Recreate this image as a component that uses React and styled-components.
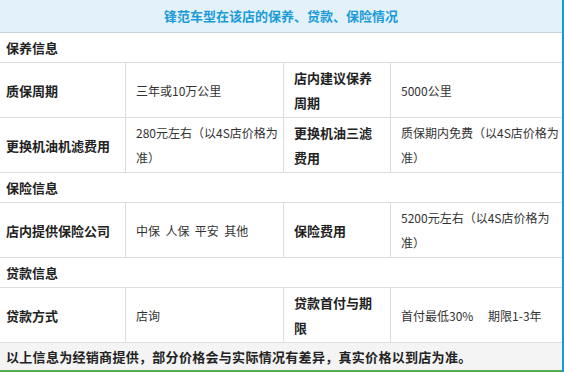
import React from "react";
import styled, { createGlobalStyle } from "styled-components";

const GlobalStyle = createGlobalStyle`
  html, body {
    margin: 0;
    padding: 0;
    background: #ffffff;
  }
  body {
    font-family: "Noto Sans CJK SC", "Liberation Sans", sans-serif;
    font-size: 12px;
    color: #333333;
  }
`;

const Wrap = styled.div`
  width: 562px;
  height: 372px;
  border-right: 2px solid #1a97d5;
  overflow: hidden;
`;

const Grid = styled.div`
  display: grid;
  grid-template-columns: 125px 158px 107px 172px;
`;

const Title = styled.div`
  grid-column: 1 / -1;
  height: 32px;
  line-height: 31px;
  text-align: center;
  background: #e3f2fa;
  border-bottom: 1px solid #c3d5de;
  color: #1b9bd7;
  font-size: 13px;
  font-weight: 700;
`;

const Section = styled.div`
  grid-column: 1 / -1;
  padding: 2px 6px;
  line-height: 25px;
  border-bottom: 1px solid #dddddd;
  font-size: 13px;
  font-weight: 700;
  color: #222222;
`;

const Cell = styled.div`
  display: flex;
  align-items: center;
  box-sizing: border-box;
  min-height: 55px;
  padding: 2px 2px 2px ${(p) => (p.$first ? "6px" : "10px")};
  line-height: 25px;
  white-space: pre-wrap;
  border-bottom: 1px solid #dddddd;
  border-left: ${(p) => (p.$first ? "none" : "1px solid #dddddd")};
  font-size: ${(p) => (p.$label ? "13px" : "12px")};
  font-weight: ${(p) => (p.$label ? 700 : 400)};
  color: ${(p) => (p.$label ? "#222222" : "#333333")};
`;

const Footer = styled.div`
  height: 27px;
  line-height: 27px;
  padding-left: 6px;
  background: #f4f4f4;
  border-bottom: 2px solid #4cae4c;
  font-size: 13px;
  font-weight: 700;
  letter-spacing: 0.3px;
  color: #222222;
`;

const Lines = ({ text }) => (
  <span>
    {text.split("\n").map((t, i) => (
      <React.Fragment key={i}>
        {i > 0 && <br />}
        {t}
      </React.Fragment>
    ))}
  </span>
);

const sections = [
  {
    name: "保养信息",
    rows: [
      ["质保周期", "三年或10万公里", "店内建议保养\n周期", "5000公里"],
      ["更换机油机滤费用", "280元左右（以4S店价格为\n准）", "更换机油三滤\n费用", "质保期内免费（以4S店价格为\n准）"],
    ],
  },
  {
    name: "保险信息",
    rows: [["店内提供保险公司", "中保  人保  平安  其他", "保险费用", "5200元左右（以4S店价格为\n准）"]],
  },
  {
    name: "贷款信息",
    rows: [["贷款方式", "店询", "贷款首付与期\n限", "首付最低30%　 期限1-3年"]],
  },
];

export default function App() {
  return (
    <Wrap>
      <GlobalStyle />
      <Grid>
        <Title>锋范车型在该店的保养、贷款、保险情况</Title>
        {sections.map((s) => (
          <React.Fragment key={s.name}>
            <Section>{s.name}</Section>
            {s.rows.map((r) =>
              r.map((c, i) => (
                <Cell key={r[0] + i} $first={i === 0} $label={i % 2 === 0}>
                  <Lines text={c} />
                </Cell>
              ))
            )}
          </React.Fragment>
        ))}
      </Grid>
      <Footer>以上信息为经销商提供，部分价格会与实际情况有差异，真实价格以到店为准。</Footer>
    </Wrap>
  );
}
